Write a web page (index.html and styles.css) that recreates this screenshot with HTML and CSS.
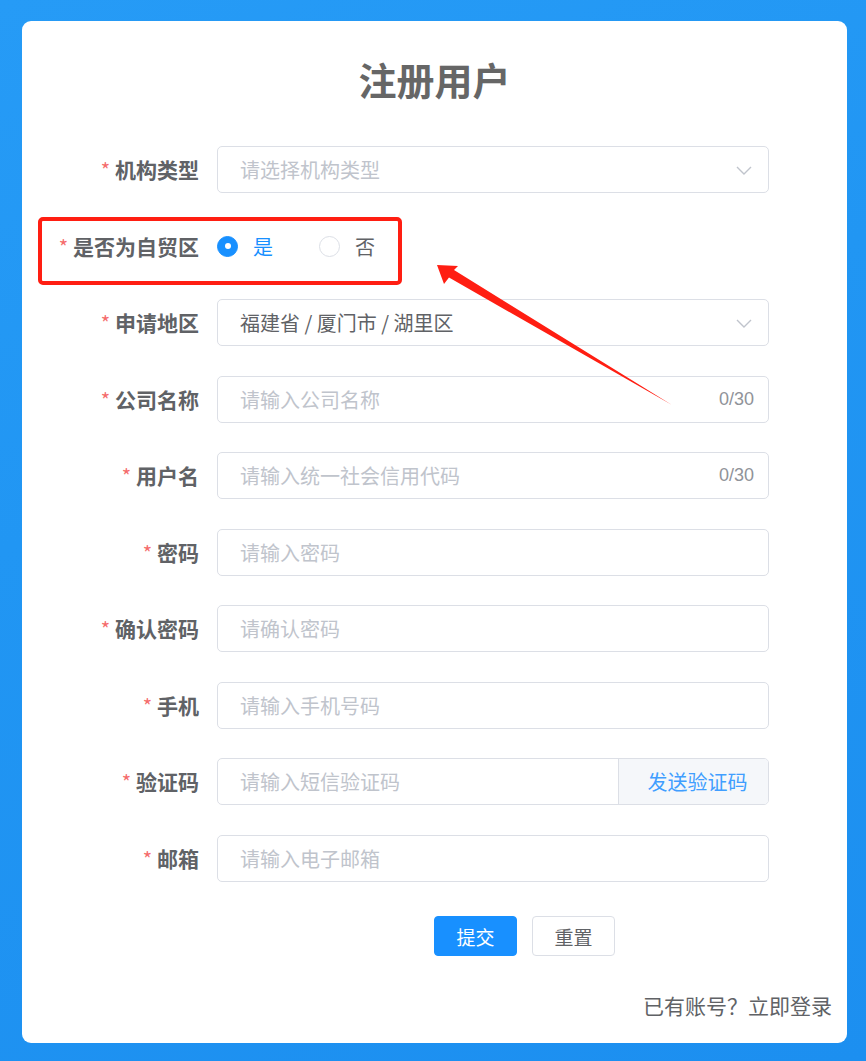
FILE: index.html
```html
<!DOCTYPE html>
<html lang="zh-CN">
<head>
<meta charset="utf-8">
<title>注册用户</title>
<link rel="stylesheet" href="styles.css">
</head>
<body>
<div class="page">
  <div class="card">
    <h1 class="title">注册用户</h1>
    <form class="form">
      <div class="row">
        <label class="label"><span class="req">*</span>机构类型</label>
        <div class="field">
          <input class="inp" placeholder="请选择机构类型" readonly>
          <svg class="chev" width="16" height="9" viewBox="0 0 16 9"><path d="M1 1l7 7 7-7" fill="none" stroke="#c0c4cc" stroke-width="1.4"/></svg>
        </div>
      </div>
      <div class="row row-mark">
        <label class="label"><span class="req">*</span>是否为自贸区</label>
        <div class="radios">
          <span class="radio checked"><span class="dot"></span><span class="rtext">是</span></span>
          <span class="radio"><span class="dot"></span><span class="rtext">否</span></span>
        </div>
      </div>
      <div class="row">
        <label class="label"><span class="req">*</span>申请地区</label>
        <div class="field">
          <input class="inp" value="福建省 / 厦门市 / 湖里区" readonly>
          <svg class="chev" width="16" height="9" viewBox="0 0 16 9"><path d="M1 1l7 7 7-7" fill="none" stroke="#c0c4cc" stroke-width="1.4"/></svg>
        </div>
      </div>
      <div class="row">
        <label class="label"><span class="req">*</span>公司名称</label>
        <div class="field">
          <input class="inp" placeholder="请输入公司名称">
          <span class="count">0/30</span>
        </div>
      </div>
      <div class="row">
        <label class="label"><span class="req">*</span>用户名</label>
        <div class="field">
          <input class="inp" placeholder="请输入统一社会信用代码">
          <span class="count">0/30</span>
        </div>
      </div>
      <div class="row">
        <label class="label"><span class="req">*</span>密码</label>
        <div class="field"><input class="inp" type="password" placeholder="请输入密码"></div>
      </div>
      <div class="row">
        <label class="label"><span class="req">*</span>确认密码</label>
        <div class="field"><input class="inp" type="password" placeholder="请确认密码"></div>
      </div>
      <div class="row">
        <label class="label"><span class="req">*</span>手机</label>
        <div class="field"><input class="inp" placeholder="请输入手机号码"></div>
      </div>
      <div class="row">
        <label class="label"><span class="req">*</span>验证码</label>
        <div class="field">
          <input class="inp" placeholder="请输入短信验证码">
          <span class="addon">发送验证码</span>
        </div>
      </div>
      <div class="row">
        <label class="label"><span class="req">*</span>邮箱</label>
        <div class="field"><input class="inp" placeholder="请输入电子邮箱"></div>
      </div>
      <div class="actions">
        <button type="button" class="btn primary">提交</button>
        <button type="button" class="btn">重置</button>
      </div>
    </form>
    <div class="login">已有账号？立即登录</div>
  </div>
  <svg class="arrow" width="866" height="1061" viewBox="0 0 866 1061">
    <polygon points="437,265 458,266 454,270 672,405 449,277.6 444,284" fill="#ff1e12"/>
  </svg>
</div>
</body>
</html>
```

FILE: styles.css
```css
* { box-sizing: border-box; }
html, body {
  margin: 0;
  padding: 0;
}
body {
  font-family: "Noto Sans CJK SC", "Noto Sans", "Liberation Sans", sans-serif;
  background: linear-gradient(160deg, #269bf6 0%, #2196f3 40%, #1c8ff0 100%);
  width: 866px;
  height: 1061px;
  overflow: hidden;
}
.page {
  position: relative;
  padding: 21px 19px 18px 22px;
  height: 1061px;
}
.card {
  background: #fff;
  border-radius: 9px;
  padding: 33px 0 23px 0;
}
.title {
  margin: 0 0 42px 0;
  height: 50px;
  line-height: 50px;
  text-align: center;
  font-size: 38px;
  font-weight: 700;
  color: #666;
}
.form {
  margin: 0;
}
.row {
  display: flex;
  align-items: center;
  height: 47px;
  margin-bottom: 29.5px;
}
.row-mark {
  position: relative;
}
.row-mark::after {
  content: "";
  position: absolute;
  left: 16px;
  top: -6px;
  width: 356px;
  height: 60px;
  border: 4px solid #ff1e12;
  border-radius: 5px;
  pointer-events: none;
}
.label {
  width: 195px;
  flex: none;
  padding-right: 18px;
  text-align: right;
  font-size: 21px;
  font-weight: 700;
  color: #606266;
  line-height: 47px;
  white-space: nowrap;
}
.req {
  color: #f56c6c;
  font-weight: 400;
  font-size: 20px;
  margin-right: 5px;
}
.field {
  width: 552px;
  height: 47px;
  display: flex;
  align-items: center;
  border: 1px solid #dcdfe6;
  border-radius: 5px;
  background: #fff;
  overflow: hidden;
}
.inp {
  flex: 1;
  min-width: 0;
  height: 100%;
  border: none;
  outline: none;
  background: transparent;
  padding: 0 0 0 22px;
  font-family: inherit;
  font-size: 20px;
  color: #606266;
}
.inp::placeholder {
  color: #c0c4cc;
  opacity: 1;
}
.chev {
  flex: none;
  margin-right: 16px;
  margin-top: 2px;
}
.count {
  flex: none;
  margin-right: 14px;
  font-size: 18px;
  color: #909399;
  font-family: "Liberation Sans", "Noto Sans", sans-serif;
}
.addon {
  flex: none;
  width: 150px;
  height: 100%;
  display: flex;
  align-items: center;
  justify-content: center;
  padding-left: 8px;
  background: #f5f7fa;
  border-left: 1px solid #dcdfe6;
  color: #409eff;
  font-size: 20px;
}
.radios {
  display: flex;
  align-items: center;
  gap: 46px;
  height: 47px;
}
.radio {
  display: flex;
  align-items: center;
  font-size: 20px;
  color: #606266;
}
.dot {
  width: 21px;
  height: 21px;
  border-radius: 50%;
  border: 1px solid #dcdfe6;
  background: #fff;
  display: flex;
  align-items: center;
  justify-content: center;
}
.radio.checked .dot {
  background: #1890ff;
  border-color: #1890ff;
}
.radio.checked .dot::after {
  content: "";
  width: 6px;
  height: 6px;
  border-radius: 50%;
  background: #fff;
}
.rtext {
  margin-left: 15px;
}
.radio.checked .rtext {
  color: #1890ff;
}
.actions {
  display: flex;
  gap: 15px;
  padding-left: 412px;
  margin-top: 34.5px;
}
.btn {
  width: 83px;
  height: 40px;
  border: 1px solid #dcdfe6;
  border-radius: 4px;
  background: #fff;
  color: #606266;
  font-family: inherit;
  font-size: 19px;
  padding: 0;
  cursor: pointer;
}
.btn.primary {
  background: #1890ff;
  border-color: #1890ff;
  color: #fff;
}
.login {
  margin-top: 34px;
  height: 30px;
  line-height: 30px;
  text-align: right;
  padding-right: 15px;
  font-size: 21px;
  color: #606266;
}
.arrow {
  position: absolute;
  left: 0;
  top: 0;
  pointer-events: none;
}
```
